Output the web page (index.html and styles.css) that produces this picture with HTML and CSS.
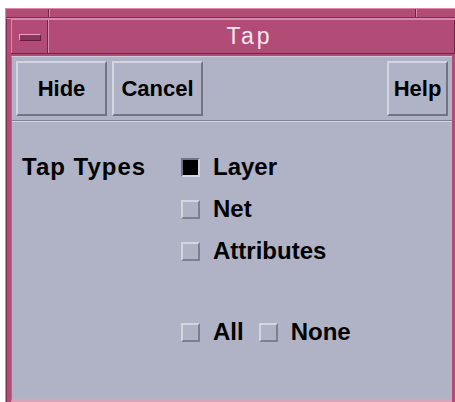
FILE: index.html
```html
<!DOCTYPE html>
<html>
<head>
<meta charset="utf-8">
<title>Tap</title>
<link rel="stylesheet" href="styles.css">
</head>
<body>
<div class="frame">
  <div class="frame-top">
    <span class="seg seg-left"></span>
    <span class="seg seg-mid"></span>
    <span class="seg seg-right"></span>
  </div>
  <div class="frame-inner">
    <div class="titlebar">
      <div class="menu-btn"><span class="menu-bar"></span></div>
      <div class="title">Tap</div>
    </div>
    <div class="client">
      <div class="toolbar">
        <button class="btn btn-wide">Hide</button>
        <button class="btn btn-wide">Cancel</button>
        <span class="spacer"></span>
        <button class="btn btn-help">Help</button>
      </div>
      <div class="sep"></div>
      <div class="form">
        <div class="label">Tap Types</div>
        <div class="options">
          <label class="opt"><span class="box checked"></span>Layer</label>
          <label class="opt"><span class="box"></span>Net</label>
          <label class="opt"><span class="box"></span>Attributes</label>
          <div class="opt-row">
            <label class="opt"><span class="box"></span>All</label>
            <label class="opt"><span class="box"></span>None</label>
          </div>
        </div>
      </div>
    </div>
  </div>
</div>
</body>
</html>
```
FILE: styles.css
```css
html, body {
  margin: 0;
  padding: 0;
  background: #ffffff;
  overflow: hidden;
}

body {
  font-family: "Liberation Sans", Arial, sans-serif;
  width: 455px;
  height: 402px;
}

/* window manager frame */
.frame {
  margin: 8px 0 0 5px;
  height: 394px;
  background: #b24c77;
  border-top: 1px solid #d98aa9;
  border-left: 1px solid #d98aa9;
  box-sizing: border-box;
  display: flex;
  flex-direction: column;
}

.frame-top {
  height: 8px;
  display: flex;
  border-bottom: 1px solid #7e2f51;
}

.seg {
  display: block;
  height: 100%;
}
.seg-left { width: 42px; border-right: 1px solid #6f2646; }
.seg-mid { flex: 1; border-left: 1px solid #d98aa9; border-right: 1px solid #6f2646; }
.seg-right { width: 38px; border-left: 1px solid #d98aa9; }

.frame-inner {
  flex: 1;
  display: flex;
  flex-direction: column;
  padding-left: 4px;
  border-left: 1px solid #7e2f51;
  border-top: 1px solid #d98aa9;
}

.titlebar {
  height: 35px;
  display: flex;
  border-top: 1px solid #d98aa9;
  border-bottom: 1px solid #6f2646;
  box-sizing: border-box;
}

.menu-btn {
  width: 37px;
  border-left: 1px solid #d98aa9;
  border-right: 1px solid #6f2646;
  display: flex;
  align-items: center;
  justify-content: center;
  box-sizing: border-box;
}

.menu-bar {
  width: 20px;
  height: 5px;
  background: #8a3559;
  border-top: 1px solid #e6a5bf;
  border-left: 1px solid #e6a5bf;
  border-bottom: 1px solid #5e1f3b;
  border-right: 1px solid #5e1f3b;
  margin-top: 1px;
}

.title {
  flex: 1;
  border-left: 1px solid #d98aa9;
  border-right: 1px solid #6f2646;
  color: #f6e6ee;
  font-size: 23px;
  letter-spacing: 3px;
  text-align: center;
  line-height: 33px;
  padding-right: 4px;
}

/* application client area */
.client {
  flex: 1;
  margin-top: 2px;
  margin-right: 3px;
  background: #b0b3c6;
  border-top: 1px solid #c9cbd8;
  border-left: 1px solid #7e8295;
  border-bottom: 3px solid #d9a3bb;
  display: flex;
  flex-direction: column;
}

.toolbar {
  display: flex;
  padding: 4px 4px 0 4px;
  gap: 5px;
  height: 59px;
  box-sizing: border-box;
}

.spacer { flex: 1; }

.btn {
  font-family: inherit;
  font-weight: bold;
  font-size: 22px;
  color: #000;
  background: #b0b3c6;
  height: 55px;
  margin: 0;
  padding: 0;
  border-top: 2px solid #d3d5e0;
  border-left: 2px solid #d3d5e0;
  border-bottom: 2px solid #6f7386;
  border-right: 2px solid #6f7386;
  box-sizing: border-box;
}

.btn-wide { width: 91px; }
.btn-help { width: 61px; }

.sep {
  margin-top: 4px;
  height: 0;
  border-top: 1px solid #7e8295;
  border-bottom: 1px solid #d3d5e0;
}

.form {
  display: flex;
  padding: 24px 0 0 10px;
  font-weight: bold;
  font-size: 24px;
  color: #000;
}

.label {
  width: 159px;
  height: 42px;
  line-height: 42px;
  letter-spacing: 1px;
}

.options {
  display: flex;
  flex-direction: column;
}

.opt {
  display: flex;
  align-items: center;
  height: 42px;
}

.opt-row {
  display: flex;
  gap: 15px;
  margin-top: 39px;
}

.box {
  width: 19px;
  height: 19px;
  box-sizing: border-box;
  margin-right: 13px;
  border-top: 2px solid #d3d5e0;
  border-left: 2px solid #d3d5e0;
  border-bottom: 2px solid #7b7f92;
  border-right: 2px solid #7b7f92;
}

.box.checked {
  background: #000;
  border-top-color: #6f7386;
  border-left-color: #6f7386;
  border-bottom-color: #d3d5e0;
  border-right-color: #d3d5e0;
}
```
